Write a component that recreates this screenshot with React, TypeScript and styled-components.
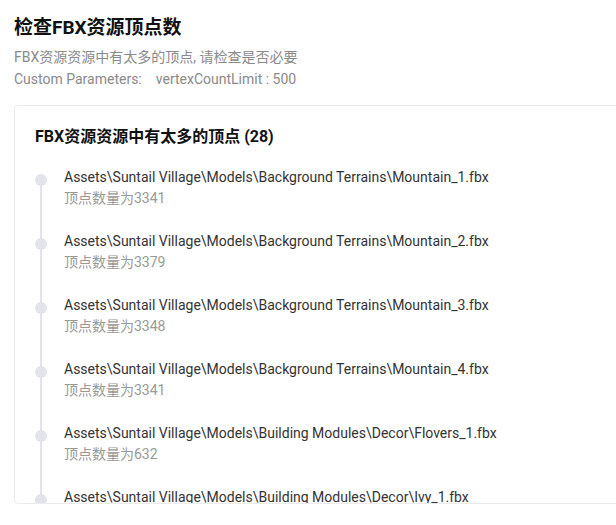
import React from "react";
import styled, { createGlobalStyle } from "styled-components";

const Global = createGlobalStyle`
  html, body { margin: 0; padding: 0; background: #fff; overflow: hidden; }
  body { font-family: Roboto, "Noto Sans CJK SC", sans-serif; }
  *, *::before, *::after { box-sizing: border-box; }
`;

const Page = styled.div`
  padding: 16px 14px 0 14px;
  width: 760px;
`;

const Title = styled.h1`
  margin: 0;
  font-size: 19px;
  line-height: 24px;
  font-weight: 700;
  color: #111;
`;

const Desc = styled.div`
  margin-top: 6px;
  font-size: 14px;
  line-height: 22px;
  color: #8a8a8a;
`;

const Param = styled.span`
  margin-left: 14px;
`;

const Card = styled.section`
  margin-top: 15px;
  height: 399px;
  border: 1px solid #ebebeb;
  border-radius: 4px;
  padding: 19px 20px;
  overflow: hidden;
`;

const CardTitle = styled.h2`
  margin: 0 0 18px 0;
  font-size: 16px;
  line-height: 24px;
  font-weight: 700;
  color: #111;
`;

const List = styled.ul`
  list-style: none;
  margin: 0;
  padding: 0;
`;

const Item = styled.li`
  display: flex;
  gap: 17px;
`;

const Rail = styled.div`
  width: 12px;
  display: flex;
  flex-direction: column;
  align-items: center;
  flex: none;
`;

const Line = styled.div<{ $hidden?: boolean; $grow?: boolean }>`
  width: 2px;
  background: ${(p) => (p.$hidden ? "transparent" : "#e2e4eb")};
  height: 7px;
  flex: ${(p) => (p.$grow ? "1" : "none")};
`;

const Dot = styled.div`
  width: 12px;
  height: 12px;
  border-radius: 50%;
  background: #e2e4eb;
  flex: none;
`;

const Body = styled.div`
  padding-bottom: 22px;
`;

const Path = styled.div`
  font-size: 14px;
  line-height: 21px;
  color: #333;
  white-space: nowrap;
`;

const Count = styled.div`
  font-size: 14px;
  line-height: 21px;
  color: #999;
`;

const items = [
  ["Assets\\Suntail Village\\Models\\Background Terrains\\Mountain_1.fbx", 3341],
  ["Assets\\Suntail Village\\Models\\Background Terrains\\Mountain_2.fbx", 3379],
  ["Assets\\Suntail Village\\Models\\Background Terrains\\Mountain_3.fbx", 3348],
  ["Assets\\Suntail Village\\Models\\Background Terrains\\Mountain_4.fbx", 3341],
  ["Assets\\Suntail Village\\Models\\Building Modules\\Decor\\Flovers_1.fbx", 632],
  ["Assets\\Suntail Village\\Models\\Building Modules\\Decor\\Ivy_1.fbx", 1024],
  ["Assets\\Suntail Village\\Models\\Building Modules\\Decor\\Ivy_2.fbx", 1024],
] as const;

export default function App() {
  return (
    <>
      <Global />
      <Page>
        <Title>检查FBX资源顶点数</Title>
        <Desc>
          <div>FBX资源资源中有太多的顶点, 请检查是否必要</div>
          <div>
            Custom Parameters:<Param>vertexCountLimit : 500</Param>
          </div>
        </Desc>
        <Card>
          <CardTitle>FBX资源资源中有太多的顶点 (28)</CardTitle>
          <List>
            {items.map(([path, n], i) => (
              <Item key={i}>
                <Rail>
                  <Line $hidden={i === 0} />
                  <Dot />
                  <Line $grow />
                </Rail>
                <Body>
                  <Path>{path}</Path>
                  <Count>顶点数量为{n}</Count>
                </Body>
              </Item>
            ))}
          </List>
        </Card>
      </Page>
    </>
  );
}
